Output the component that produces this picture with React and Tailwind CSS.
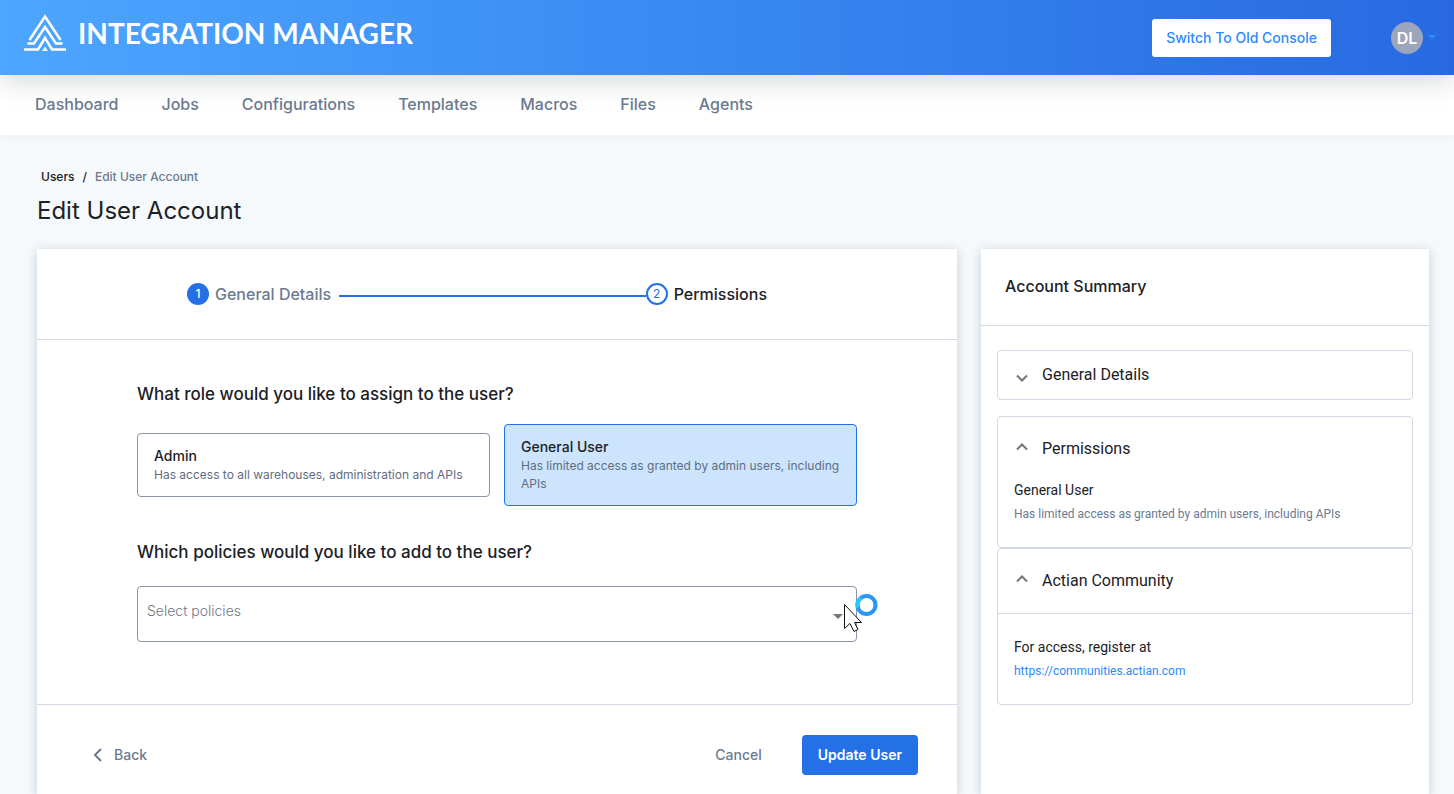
import { useState } from 'react';

const navLinks = ['Dashboard', 'Jobs', 'Configurations', 'Templates', 'Macros', 'Files', 'Agents'];

const roles = [
  { id: 'admin', name: 'Admin', description: 'Has access to all warehouses, administration and APIs' },
  { id: 'general', name: 'General User', description: 'Has limited access as granted by admin users, including APIs' },
];

function Logo() {
  return (
    <svg width="42" height="37" viewBox="0 0 42 37" fill="none" stroke="white" strokeWidth="2.5" aria-hidden="true">
      <path d="M3.500 29.500H10L21 13L32 29.500H38.500" />
      <path d="M5.500 26L21 2.500L36.500 26" />
      <path d="M0 35.500H14L21 24L28 35.500H42" />
      <path d="M18 37L21 32.500L24 37Z" fill="white" stroke="none" />
    </svg>
  );
}

function Chevron({ open }) {
  return (
    <svg
      className={open ? 'mb-1' : 'mt-1.5'}
      width="12"
      height="8"
      viewBox="0 0 12 8"
      fill="none"
      stroke="#757575"
      strokeWidth="2"
      aria-hidden="true"
    >
      <path d={open ? 'M1 6.500L6 1.500L11 6.500' : 'M1 1.500L6 6.500L11 1.500'} />
    </svg>
  );
}

function Header() {
  return (
    <header className="relative z-10 flex h-[75px] items-center justify-between bg-linear-to-r from-[#4da6ff] to-[#2869e2] pr-[17px] pl-6 shadow-[0_8px_24px_rgba(30,50,50,0.16)]">
      <div className="flex items-center gap-3 pb-2.5">
        <Logo />
        <span className="font-[Lato,sans-serif] text-[28px] leading-8 font-bold text-white">INTEGRATION MANAGER</span>
      </div>
      <div className="flex items-center">
        <button className="mr-[60px] h-[38px] rounded-[3px] bg-white px-3.5 text-sm font-medium text-[#2d89ff]">
          Switch To Old Console
        </button>
        <button className="flex items-center gap-1" aria-label="Account menu">
          <span className="flex size-8 items-center justify-center rounded-full bg-[#9ba5bc] text-base font-semibold text-white">DL</span>
          <svg width="10" height="5" viewBox="0 0 10 5" fill="#2d89ff" aria-hidden="true"><path d="M1 0H9L5 4Z" /></svg>
        </button>
      </div>
    </header>
  );
}

function Stepper() {
  return (
    <ol className="flex h-[91px] items-center border-b border-[#d3d9e4] pr-[190px] pl-[150px] text-base font-medium">
      <li className="flex items-center gap-1.5 text-[#6b7a90]">
        <span className="flex size-[22px] items-center justify-center rounded-full bg-[#2471e7] text-xs text-white">1</span>
        General Details
      </li>
      <li className="mt-1 ml-2 h-0.5 flex-1 bg-[#2471e7]" aria-hidden="true" />
      <li className="flex items-center gap-1.5 text-[#1c2126]" aria-current="step">
        <span className="flex size-[22px] items-center justify-center rounded-full border-2 border-[#2471e7] text-xs font-normal text-[#2471e7]">2</span>
        Permissions
      </li>
    </ol>
  );
}

function PermissionsForm() {
  const [role, setRole] = useState('general');
  const [policy, setPolicy] = useState('');

  return (
    <section className="flex flex-col bg-white shadow-[0_2px_10px_rgba(30,50,60,0.22)]">
      <Stepper />
      <div className="px-[100px] pt-10 pb-[62px]">
        <h2 className="text-[17px] leading-7 font-medium">What role would you like to assign to the user?</h2>
        <div className="mt-4 grid grid-cols-2 items-center gap-3.5">
          {roles.map((r) => (
            <button
              key={r.id}
              onClick={() => setRole(r.id)}
              aria-pressed={role === r.id}
              className={`rounded border py-3 pr-2 pl-4 text-left ${role === r.id ? 'border-[#2471e7] bg-[#cce5fd]' : 'border-[#8a94ad]'}`}
            >
              <span className="block text-sm font-medium">{r.name}</span>
              <span className="block text-xs leading-[18px] text-[#5f6d82]">{r.description}</span>
            </button>
          ))}
        </div>

        <h2 className="mt-8 text-[17px] leading-7 font-medium" id="policies-label">Which policies would you like to add to the user?</h2>
        <div className="relative mt-5">
          <select
            aria-labelledby="policies-label"
            value={policy}
            onChange={(e) => setPolicy(e.target.value)}
            className="block h-14 w-full appearance-none rounded border border-[#8a94ad] px-[9px] pb-1.5 text-sm font-light text-[#6f7785]"
          >
            <option value="">Select policies</option>
          </select>
          <svg className="pointer-events-none absolute top-7 right-3.5" width="10" height="6" viewBox="0 0 10 6" fill="#757575" aria-hidden="true">
            <path d="M0 0H10L5 5Z" />
          </svg>
          <svg className="pointer-events-none absolute top-[7px] -right-[22px]" width="36" height="42" viewBox="0 0 36 42" aria-hidden="true">
            <path d="M1.500 11.500V35.500L7 30.500L11 38.500L15 36.500L11.500 29.500H18.500Z" fill="white" stroke="#111" />
            <circle cx="23.500" cy="12" r="9" fill="white" stroke="#2b96f3" strokeWidth="4" />
            <path d="M14.900 14.500A9 9 0 0 1 18 5" fill="none" stroke="#22c8fb" strokeWidth="4" />
          </svg>
        </div>
      </div>

      <div className="flex flex-1 items-start justify-between border-t border-[#d3d9e4] pt-[30px] pr-[39px] pb-5 pl-14 text-sm font-medium text-[#6b7a90]">
        <button className="flex h-10 items-center gap-3">
          <svg width="9" height="14" viewBox="0 0 9 14" fill="none" stroke="currentColor" strokeWidth="2" aria-hidden="true">
            <path d="M8 1L2 7L8 13" />
          </svg>
          Back
        </button>
        <div className="flex items-center gap-10">
          <button>Cancel</button>
          <button className="h-10 rounded bg-[#2471e7] px-4 font-semibold text-white">Update User</button>
        </div>
      </div>
    </section>
  );
}

function AccountSummary() {
  return (
    <aside className="bg-white shadow-[0_2px_10px_rgba(30,50,60,0.22)]">
      <h2 className="h-[77px] border-b border-[#d3d9e4] px-6 pt-[25px] text-base font-medium">Account Summary</h2>
      <div className="px-4 pt-6 font-[Roboto,sans-serif]">
        <button className="flex h-[50px] w-full items-center gap-3.5 rounded border border-[#d3d9e4] px-[18px] text-base">
          <Chevron />
          General Details
        </button>

        <div className="mt-4 rounded border border-[#d3d9e4] pb-[21px]">
          <button className="flex h-16 w-full items-center gap-3.5 px-[18px] text-base">
            <Chevron open />
            Permissions
          </button>
          <div className="px-4">
            <p className="mb-[3px] text-sm leading-[18px]">General User</p>
            <p className="text-xs leading-6 text-[#6b7a90]">Has limited access as granted by admin users, including APIs</p>
          </div>
        </div>

        <div className="rounded border border-[#d3d9e4]">
          <button className="flex h-[65px] w-full items-center gap-3.5 border-b border-[#d3d9e4] px-[18px] text-base">
            <Chevron open />
            Actian Community
          </button>
          <div className="px-4 pt-[21px] pb-[21px]">
            <p className="text-sm leading-6">For access, register at</p>
            <a href="https://communities.actian.com" className="block text-xs leading-6 text-[#2d89ff]">https://communities.actian.com</a>
          </div>
        </div>
      </div>
    </aside>
  );
}

function App() {
  return (
    <div className="flex min-h-screen flex-col bg-[#f5f9fc] font-[Inter,sans-serif] text-[#1c2126]">
      <Header />
      <nav className="flex h-[60px] items-center gap-[43px] bg-white px-[35px] pb-0.5 text-base font-medium text-[#6b7a90] shadow-[0_2px_12px_rgba(30,50,50,0.04)]">
        {navLinks.map((name) => (
          <a key={name} href="#">{name}</a>
        ))}
      </nav>

      <main className="flex flex-1 flex-col pt-8 pr-[25px] pl-[37px]">
        <nav aria-label="Breadcrumb" className="flex gap-2 pl-1 text-xs leading-5 font-medium">
          <a href="#">Users</a>
          <span>/</span>
          <span className="text-[#6b7a90]">Edit User Account</span>
        </nav>
        <h1 className="mt-2 text-2xl leading-8">Edit User Account</h1>
        <div className="mt-[22px] grid flex-1 grid-cols-[115fr_56fr] gap-6">
          <PermissionsForm />
          <AccountSummary />
        </div>
      </main>
    </div>
  );
}

export default App;
